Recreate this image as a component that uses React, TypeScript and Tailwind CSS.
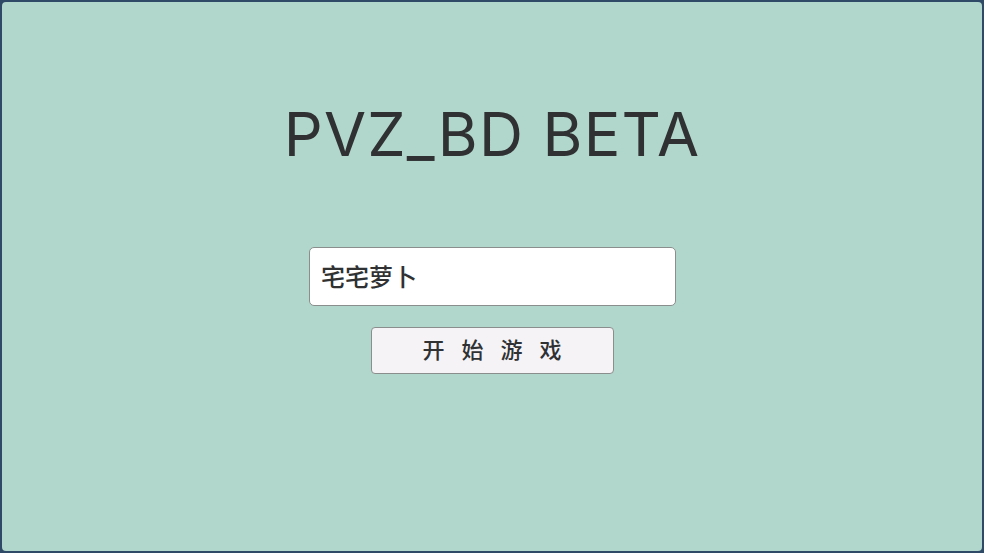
export default function App() {
  return (
    <div className="w-[984px] h-[553px] bg-[#2f4a66] p-[2px]">
      <div className="h-full w-full rounded-[4px] bg-[#b1d6cc] flex flex-col items-center font-['Inter','Noto_Sans_CJK_SC',sans-serif]">
        <h1 className="mt-[92px] text-[61px] leading-[80px] text-[#2f3132] font-normal tracking-[1.2px]">
          PVZ_BD BETA
        </h1>
        <input
          defaultValue="宅宅萝卜"
          className="mt-[73px] ml-[1px] w-[367px] h-[59px] rounded-[5px] border border-[#8a8f8d] bg-white px-[11px] pb-[3px] text-[24px] font-medium text-[#2f3132] outline-none font-['Noto_Sans_CJK_SC',sans-serif]"
        />
        <button className="mt-[21px] w-[243px] h-[47px] rounded-[4px] border border-[#8a8f8d] bg-[#f5f3f6] pb-[4px] pl-[17px] text-[22px] font-medium tracking-[17px] text-[#2f3132] font-['Noto_Sans_CJK_SC',sans-serif]">
          开始游戏
        </button>
      </div>
    </div>
  )
}
